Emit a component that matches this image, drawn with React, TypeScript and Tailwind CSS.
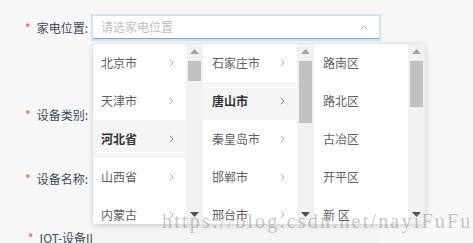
import React from "react";

type Col = {
  items: string[];
  active: number;
  arrow: boolean;
  thumbTop: number;
  thumbHeight: number;
  width: string;
};

const columns: Col[] = [
  { items: ["北京市", "天津市", "河北省", "山西省", "内蒙古"], active: 2, arrow: true, thumbTop: 17, thumbHeight: 20, width: "w-[93px]" },
  { items: ["石家庄市", "唐山市", "秦皇岛市", "邯郸市", "邢台市"], active: 1, arrow: true, thumbTop: 17, thumbHeight: 62, width: "w-[94px]" },
  { items: ["路南区", "路北区", "古冶区", "开平区", "新 区"], active: -1, arrow: false, thumbTop: 17, thumbHeight: 46, width: "w-[94px]" },
];

function ChevronRight({ dark }: { dark?: boolean }) {
  return (
    <svg width="5" height="8" viewBox="0 0 5 8" fill="none" className="shrink-0">
      <path d="M0.8 0.8L4 4L0.8 7.2" stroke={dark ? "#888" : "#b4b4b4"} strokeWidth="1" />
    </svg>
  );
}

function Scrollbar({ top, height }: { top: number; height: number }) {
  return (
    <div className="relative w-[17px] h-full bg-[#f1f1f1] shrink-0">
      {/* up arrow (disabled) */}
      <svg className="absolute left-[4px] top-[5px]" width="9" height="5" viewBox="0 0 9 5">
        <path d="M4.5 0L9 5H0z" fill="#a3a3a3" />
      </svg>
      <div
        className="absolute left-[2px] w-[13px] bg-[#c1c1c1]"
        style={{ top, height }}
      />
      {/* down arrow */}
      <svg className="absolute left-[4px] bottom-[7px]" width="9" height="5" viewBox="0 0 9 5">
        <path d="M0 0H9L4.5 5z" fill="#505050" />
      </svg>
    </div>
  );
}

function Label({ text }: { text: string }) {
  return (
    <div className="w-[92px] shrink-0 pr-[4px] text-right whitespace-nowrap text-[12px] text-[#3f4b5c]">
      <span className="text-[#ff4949] mr-[6px]">*</span>
      {text}
    </div>
  );
}

export default function App() {
  return (
    <div
      className="relative w-[473px] h-[243px] overflow-hidden bg-[#f7f7f7]"
      style={{ fontFamily: "'Noto Sans CJK SC', 'Noto Sans', sans-serif" }}
    >
      <div className="flex flex-col">
        {/* 家电位置 */}
        <div className="mt-[14px] flex items-center h-[27px]">
          <Label text="家电位置:" />
          <div className="w-[290px] h-[27px] border-2 border-[#d5e1f5] bg-white -ml-[1px]">
            <div className="h-full flex items-center justify-between pl-[8px] pr-[11px] border-b border-[#7ba4ea]">
              <span className="text-[12px] text-[#bfbfbf]">请选家电位置</span>
              <svg width="8" height="5" viewBox="0 0 8 5" fill="none">
                <path d="M0.8 4.3L4 1L7.2 4.3" stroke="#b8b8b8" strokeWidth="1" />
              </svg>
            </div>
          </div>
        </div>

        {/* 设备类别 */}
        <div className="mt-[60px] flex items-center h-[27px]">
          <Label text="设备类别:" />
        </div>

        {/* 设备名称 */}
        <div className="mt-[37px] flex items-center h-[27px]">
          <Label text="设备名称:" />
        </div>

        {/* IOT-设备ID */}
        <div className="mt-[32px] flex items-center h-[27px]">
          <div className="w-[92px] shrink-0 pl-[28px] overflow-hidden whitespace-nowrap text-[12px] text-[#3f4b5c]">
            <span className="text-[#ff4949] mr-[6px]">*</span>
            IOT-设备ID:
          </div>
          <div className="w-[288px] h-[27px] bg-[#f4f4f4]" />
        </div>
      </div>

      {/* cascader dropdown */}
      <div className="absolute left-[93px] top-[44px] w-[332px] h-[180px] flex bg-white rounded-[3px] overflow-hidden shadow-[0_1px_6px_rgba(0,0,0,0.18)]">
        {columns.map((col, ci) => (
          <div key={ci} className="flex h-full">
            <div className={`${col.width} h-full overflow-hidden`}>
              {col.items.map((it, i) => {
                const active = i === col.active;
                return (
                  <div
                    key={it}
                    className={`h-[38px] flex items-center justify-between pr-[12px] text-[12px] ${
                      ci === 0 ? "pl-[8px]" : "pl-[9px]"
                    } ${active ? "bg-[#f5f5f5] text-[#333] font-bold" : "text-[#5f5f5f]"}`}
                  >
                    <span>{it}</span>
                    {col.arrow && <ChevronRight dark={active} />}
                  </div>
                );
              })}
            </div>
            <Scrollbar top={col.thumbTop} height={col.thumbHeight} />
          </div>
        ))}
      </div>

      {/* watermark */}
      <div
        className="absolute left-[162px] top-[209px] text-[20px] leading-[24px] tracking-[2.2px] text-[rgba(130,130,130,0.45)] whitespace-nowrap pointer-events-none"
        style={{ fontFamily: "'Liberation Serif', serif" }}
      >
        https://blog.csdn.net/nayiFuFu
      </div>
    </div>
  );
}
